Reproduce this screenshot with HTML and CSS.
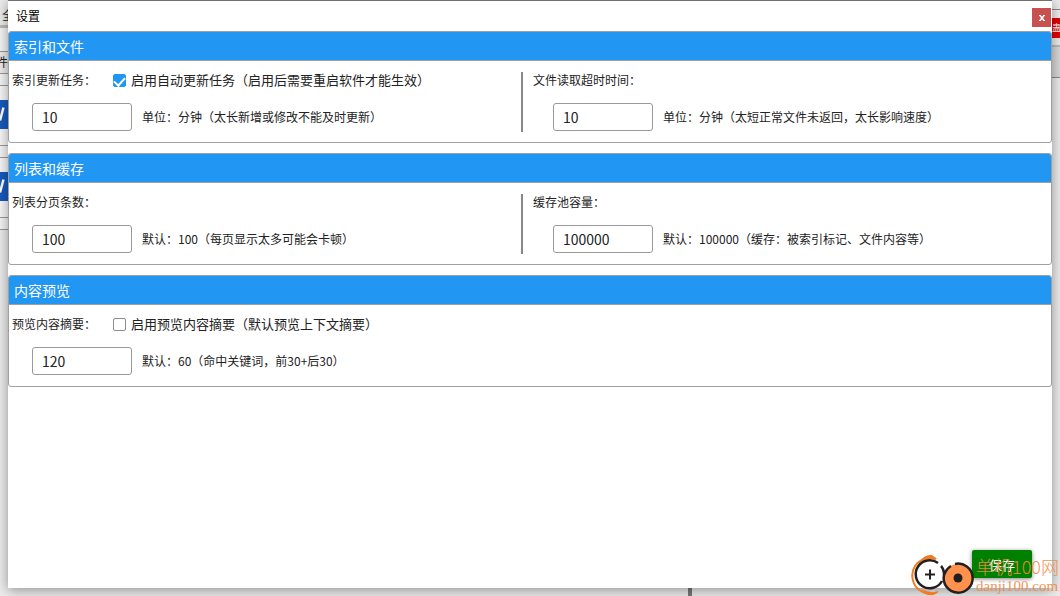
FILE: index.html
```html
<!DOCTYPE html>
<html lang="zh-CN">
<head>
<meta charset="utf-8">
<title>设置</title>
<link rel="stylesheet" href="styles.css">
</head>
<body>
<div class="backdrop" aria-hidden="true">
  <div class="edge edge-left">
    <div class="strip strip-tab">全</div>
    <div class="strip strip-blank"></div>
    <div class="strip strip-name">件</div>
    <div class="strip strip-gap"></div>
    <div class="strip strip-file"><svg class="word" viewBox="0 0 8 28"><path d="M0 20L3.500 7" stroke="#fff" stroke-width="2.500" fill="none"/></svg></div>
    <div class="strip strip-gap"></div>
    <div class="strip strip-file"><svg class="word" viewBox="0 0 8 28"><path d="M0 20L3.500 7" stroke="#fff" stroke-width="2.500" fill="none"/></svg></div>
    <div class="strip strip-gap"></div>
  </div>
  <div class="edge edge-right">
    <div class="red">蛊</div>
    <div class="strip-r"></div>
    <div class="strip-r tall"></div>
  </div>
  <div class="splitter"></div>
</div>
<main class="window">
  <header class="titlebar">
    <h1 class="title">设置</h1>
    <button class="close" type="button" aria-label="关闭"><svg viewBox="0 0 8 8"><path d="M2 1.500L6 6.500M6 1.500L2 6.500" stroke="#fff" stroke-width="1.500"/><path d="M1 1.500H3M5 1.500H7M1 6.500H3M5 6.500H7" stroke="#fff"/></svg></button>
  </header>
  <form class="settings">
    <section class="group">
      <h2 class="group-title">索引和文件</h2>
      <div class="group-body">
        <div class="column">
          <div class="row">
            <label for="interval">索引更新任务：</label>
            <label class="check"><input type="checkbox" checked><span>启用自动更新任务（启用后需要重启软件才能生效）</span></label>
          </div>
          <div class="field"><input class="number" id="interval" type="text" value="10"><span>单位：分钟（太长新增或修改不能及时更新）</span></div>
        </div>
        <div class="divider"></div>
        <div class="column column-right">
          <div class="row"><label for="timeout">文件读取超时时间：</label></div>
          <div class="field"><input class="number" id="timeout" type="text" value="10"><span>单位：分钟（太短正常文件未返回，太长影响速度）</span></div>
        </div>
      </div>
    </section>
    <section class="group">
      <h2 class="group-title">列表和缓存</h2>
      <div class="group-body">
        <div class="column">
          <div class="row"><label for="page">列表分页条数：</label></div>
          <div class="field"><input class="number" id="page" type="text" value="100"><span>默认：100（每页显示太多可能会卡顿）</span></div>
        </div>
        <div class="divider"></div>
        <div class="column column-right">
          <div class="row"><label for="cache">缓存池容量：</label></div>
          <div class="field"><input class="number" id="cache" type="text" value="100000"><span>默认：100000（缓存：被索引标记、文件内容等）</span></div>
        </div>
      </div>
    </section>
    <section class="group">
      <h2 class="group-title">内容预览</h2>
      <div class="group-body">
        <div class="column">
          <div class="row">
            <label for="summary">预览内容摘要：</label>
            <label class="check"><input type="checkbox"><span>启用预览内容摘要（默认预览上下文摘要）</span></label>
          </div>
          <div class="field"><input class="number" id="summary" type="text" value="120"><span>默认：60（命中关键词，前30+后30）</span></div>
        </div>
      </div>
    </section>
    <div class="actions"><button class="save" type="submit">保存</button></div>
  </form>
</main>
<div class="watermark">
  <svg class="mark" viewBox="0 0 64 42">
    <path d="M25 5C14 1 8 7 4 12C-1 20 1 32 10 37C15 40 21 42 26 38" fill="none" stroke="#f47a20" stroke-width="2"/>
    <path d="M9 7Q14 0 21 1L26 5Q14 4 7 10ZM10 35Q20 40 28 37Q22 44 14 39Z" fill="#f47a20"/>
    <circle cx="19" cy="21" r="14" fill="#fff"/>
    <path d="M27 9A14 14 0 1 0 31 27" fill="none" stroke="#231f20" stroke-width="2.500"/>
    <circle cx="47" cy="24" r="14" fill="#ff914d"/>
    <path d="M44 10A14.500 14.500 0 1 1 33 21Q33 15 30 12M33 21Q36 14 40 12" fill="none" stroke="#231f20" stroke-width="2.500"/>
    <path d="M14 20.500H24M19 15.500V25.500" stroke="#231f20" stroke-width="2"/>
    <circle cx="47" cy="24" r="4.500" fill="#231f20"/>
  </svg>
  <div class="brand"><span class="brand-name">单机100网</span><span class="brand-site">danji100.com</span></div>
</div>
</body>
</html>
```
FILE: styles.css
```css
* { box-sizing: border-box; }
body {
  margin: 0;
  min-height: 100vh;
  display: flex;
  position: relative;
  overflow: hidden;
  background: #ececec;
  color: #222;
  font: 12px/16px "Noto Sans CJK SC", sans-serif;
}
h1, h2 { margin: 0; font-weight: 400; }
button, input { font-family: inherit; }

.backdrop { position: absolute; inset: 0; overflow: hidden; }
.edge { position: absolute; top: 0; width: 8px; overflow: hidden; }
.edge-left { left: 0; }
.edge-right { right: 0; padding-top: 9px; }
.strip { overflow: hidden; border-bottom: 1px solid #999; }
.strip-tab { height: 28px; padding: 7px 0 0 2px; border-bottom: 3px solid #bbb; }
.strip-blank { height: 24px; background: #f5f5f5; }
.strip-name { height: 22px; margin-left: -4px; padding-top: 2px; }
.strip-gap { height: 12px; background: #f5f5f5; }
.strip-file { height: 60px; padding-top: 14px; background: #f8f8f8; }
.word { display: block; width: 8px; height: 29px; background: #185abd; }
.red { height: 29px; margin-bottom: 7px; padding-top: 12px; border-top: 1px solid #888; background: linear-gradient(#eee 8px, #e60000 8px); color: #fff; font-size: 9px; line-height: 12px; }
.strip-r { height: 2px; background: #bbb; }
.tall { height: 31px; background: #d8d8d8; border-bottom: 1px solid #888; }
.splitter { position: absolute; bottom: 0; left: 65%; width: 4px; height: 8px; margin-left: -1px; background: #777; }

.window {
  position: relative;
  flex: 1;
  display: flex;
  flex-direction: column;
  margin: 0 8px 8px;
  background: #fff;
  border-top: 1px solid #707070;
  box-shadow: 0 2px 12px rgba(0, 0, 0, .4);
}
.titlebar { display: flex; justify-content: space-between; height: 30px; padding: 7px 1px 0 8px; }
.title { font-size: 12px; line-height: 16px; color: #000; }
.close { display: grid; place-items: center; width: 19px; height: 19px; padding: 0; border: 0; background: #c75050; }
.close svg { width: 8px; height: 8px; }

.settings { flex: 1; display: flex; flex-direction: column; gap: 10px; }
.group { border: 1px solid #a0a0a0; border-radius: 3px; }
.group-title { height: 29px; padding-left: 5px; border-bottom: 1px solid #a0a0a0; border-radius: 2px 2px 0 0; background: #2196f3; color: #fff; font-size: 14px; line-height: 29px; }
.group-body { display: grid; grid-template-columns: minmax(0, 1fr) 2px minmax(0, 1fr); padding: 11px 16px 10px 0; }
.divider { background: #888; }
.column { padding: 0 0 1px 3px; white-space: nowrap; }
.column-right { padding-left: 10px; }
.row { display: flex; align-items: center; gap: 17px; height: 16px; margin-bottom: 15px; }
.field { display: flex; align-items: center; gap: 10px; padding-left: 20px; }
.number { width: 100px; height: 28px; padding: 0 9px; border: 1px solid #999; border-radius: 3px; background: #fff; color: #222; font-size: 14px; }
.check { display: flex; align-items: center; gap: 5px; font-size: 13px; }
.check input { appearance: none; width: 13px; height: 13px; margin: 0; border: 1px solid #8c8c8c; border-radius: 2px; background: #fff; }
.check input:checked { border-color: #2196f3; background: #2196f3; display: grid; place-items: center; }
.check input:checked::after { content: ""; width: 5px; height: 9px; margin-bottom: 2px; border: solid #fff; border-width: 0 2px 2px 0; transform: rotate(42deg); }

.actions { display: flex; justify-content: flex-end; margin-top: auto; padding: 0 20px 10px; }
.save { width: 60px; height: 28px; padding: 0; border: 0; border-radius: 2px; background: #008000; color: #fff; font-size: 13px; box-shadow: 0 1px 4px rgba(0, 0, 0, .5); }

.watermark { position: absolute; right: 2px; bottom: 0; display: flex; align-items: center; gap: 1px; color: #f28b46; pointer-events: none; }
.mark { width: 64px; height: 42px; }
.brand { display: flex; flex-direction: column; width: 82px; opacity: .9; white-space: nowrap; }
.brand-name { font-size: 18px; line-height: 21px; font-weight: 300; }
.brand-site { font: 15px/18px "Liberation Serif", serif; }
```
